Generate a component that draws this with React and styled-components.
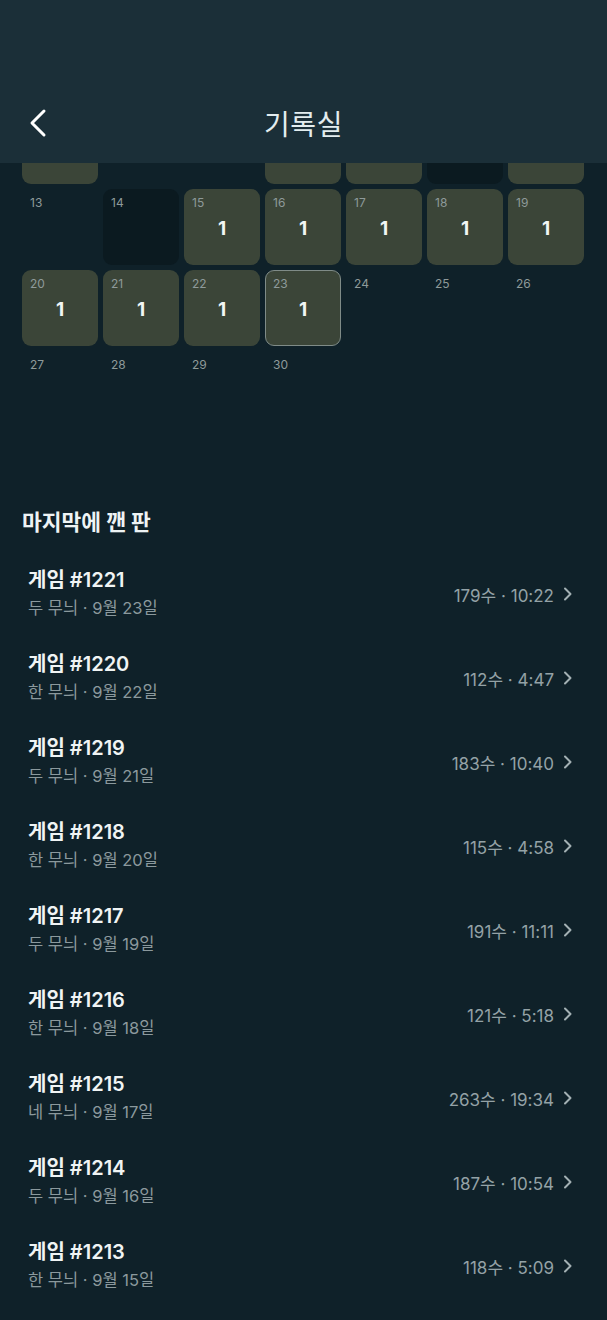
import React from "react";
import styled, { createGlobalStyle } from "styled-components";

const GlobalStyle = createGlobalStyle`
  html, body {
    margin: 0;
    padding: 0;
    background: #0f2129;
  }
  body {
    font-family: "Inter", "Noto Sans CJK KR", sans-serif;
    color: #eef3f4;
    -webkit-font-smoothing: antialiased;
  }
`;

const Page = styled.div`
  width: 607px;
  height: 1320px;
  background: #0f2129;
  display: flex;
  flex-direction: column;
  overflow: hidden;
`;

const Header = styled.header`
  flex: 0 0 163px;
  background: #1b2f38;
  display: flex;
  flex-direction: column;
  justify-content: flex-end;
`;

const NavBar = styled.div`
  height: 80px;
  display: grid;
  grid-template-columns: 80px 1fr 80px;
  align-items: center;
`;

const BackButton = styled.button`
  background: none;
  border: 0;
  padding: 0 0 0 28px;
  height: 100%;
  display: flex;
  align-items: center;
  cursor: pointer;
`;

const Title = styled.h1`
  margin: 0;
  text-align: center;
  font-size: 28px;
  font-weight: 400;
  color: #e3edef;
  letter-spacing: 0.5px;
`;

/* scrolled content area: the first week row sits partly under the header */
const Scroll = styled.main`
  flex: 1;
  overflow: hidden;
`;

const Calendar = styled.div`
  display: grid;
  grid-template-columns: repeat(7, 76px);
  grid-auto-rows: 76px;
  gap: 5px;
  padding: 0 22px;
  margin-top: -55px;
`;

const Cell = styled.div`
  position: relative;
  border-radius: 9px;
  box-sizing: border-box;
  background: ${(p) =>
    p.$kind === "played" ? "#3b4538" : p.$kind === "missed" ? "#0b1a20" : "transparent"};
  border: ${(p) => (p.$today ? "1.5px solid #7f8b87" : "none")};
  display: flex;
  align-items: center;
  justify-content: center;
`;

const DayNum = styled.span`
  position: absolute;
  top: ${(p) => (p.$today ? "5px" : "6px")};
  left: ${(p) => (p.$today ? "7px" : "8px")};
  font-size: 12px;
  color: #8e9a9a;
`;

const Count = styled.span`
  font-size: 19px;
  font-weight: 700;
  color: #f2f5f5;
  margin-top: 2px;
`;

const Section = styled.section`
  margin-top: 82px;
`;

const SectionTitle = styled.h2`
  margin: 0 0 0 22px;
  height: 26px;
  line-height: 26px;
  font-size: 21.5px;
  font-weight: 700;
  color: #eef3f4;
`;

const List = styled.ul`
  list-style: none;
  margin: 17px 0 0;
  padding: 0;
`;

const Item = styled.li`
  height: 84px;
  box-sizing: border-box;
  padding: 14px 35px 14px 28px;
  display: flex;
  align-items: center;
  justify-content: space-between;
`;

const ItemText = styled.div`
  display: flex;
  flex-direction: column;
`;

const ItemTitle = styled.span`
  line-height: 28px;
  font-size: 20px;
  font-weight: 600;
  color: #f0f4f4;
`;

const ItemSub = styled.span`
  line-height: 28px;
  font-size: 16.5px;
  color: #8b999d;
`;

const Meta = styled.div`
  display: flex;
  align-items: center;
  gap: 8px;
  font-size: 17px;
  color: #94a2a6;
`;

// the week of the 6th is scrolled mostly under the header, only its bottoms show
const cells = [
  { d: 6, k: "played", hidden: true }, { d: 7, hidden: true }, { d: 8, hidden: true },
  { d: 9, k: "played", hidden: true }, { d: 10, k: "played", hidden: true },
  { d: 11, k: "missed", hidden: true }, { d: 12, k: "played", hidden: true },
  { d: 13 }, { d: 14, k: "missed" }, { d: 15, k: "played" }, { d: 16, k: "played" }, { d: 17, k: "played" }, { d: 18, k: "played" }, { d: 19, k: "played" },
  { d: 20, k: "played" }, { d: 21, k: "played" }, { d: 22, k: "played" }, { d: 23, k: "played", today: true }, { d: 24 }, { d: 25 }, { d: 26 },
  { d: 27 }, { d: 28 }, { d: 29 }, { d: 30 },
];

const games = [
  ["1221", "두 무늬", 23, "179수", "10:22"],
  ["1220", "한 무늬", 22, "112수", "4:47"],
  ["1219", "두 무늬", 21, "183수", "10:40"],
  ["1218", "한 무늬", 20, "115수", "4:58"],
  ["1217", "두 무늬", 19, "191수", "11:11"],
  ["1216", "한 무늬", 18, "121수", "5:18"],
  ["1215", "네 무늬", 17, "263수", "19:34"],
  ["1214", "두 무늬", 16, "187수", "10:54"],
  ["1213", "한 무늬", 15, "118수", "5:09"],
];

function Chevron() {
  return (
    <svg width="10" height="14" viewBox="0 0 10 14" fill="none">
      <polyline points="3,1.5 8.5,7 3,12.5" stroke="#a3b0b3" strokeWidth="2" strokeLinecap="round" strokeLinejoin="round" />
    </svg>
  );
}

export default function App() {
  return (
    <Page>
      <GlobalStyle />
      <Header>
        <NavBar>
          <BackButton aria-label="뒤로">
            <svg width="20" height="30" viewBox="0 0 20 30" fill="none">
              <polyline points="16,3 4,15 16,27" stroke="#ffffff" strokeWidth="3" strokeLinecap="round" strokeLinejoin="round" />
            </svg>
          </BackButton>
          <Title>기록실</Title>
          <div />
        </NavBar>
      </Header>
      <Scroll>
        <Calendar>
          {cells.map((c) => (
            <Cell key={c.d} $kind={c.k} $today={c.today}>
              {!c.hidden && <DayNum $today={c.today}>{c.d}</DayNum>}
              {!c.hidden && c.k === "played" && <Count>1</Count>}
            </Cell>
          ))}
        </Calendar>
        <Section>
          <SectionTitle>마지막에 깬 판</SectionTitle>
          <List>
            {games.map(([id, suit, day, moves, time]) => (
              <Item key={id}>
                <ItemText>
                  <ItemTitle>게임 #{id}</ItemTitle>
                  <ItemSub>{suit} · 9월 {day}일</ItemSub>
                </ItemText>
                <Meta>
                  <span>{moves} · {time}</span>
                  <Chevron />
                </Meta>
              </Item>
            ))}
          </List>
        </Section>
      </Scroll>
    </Page>
  );
}
